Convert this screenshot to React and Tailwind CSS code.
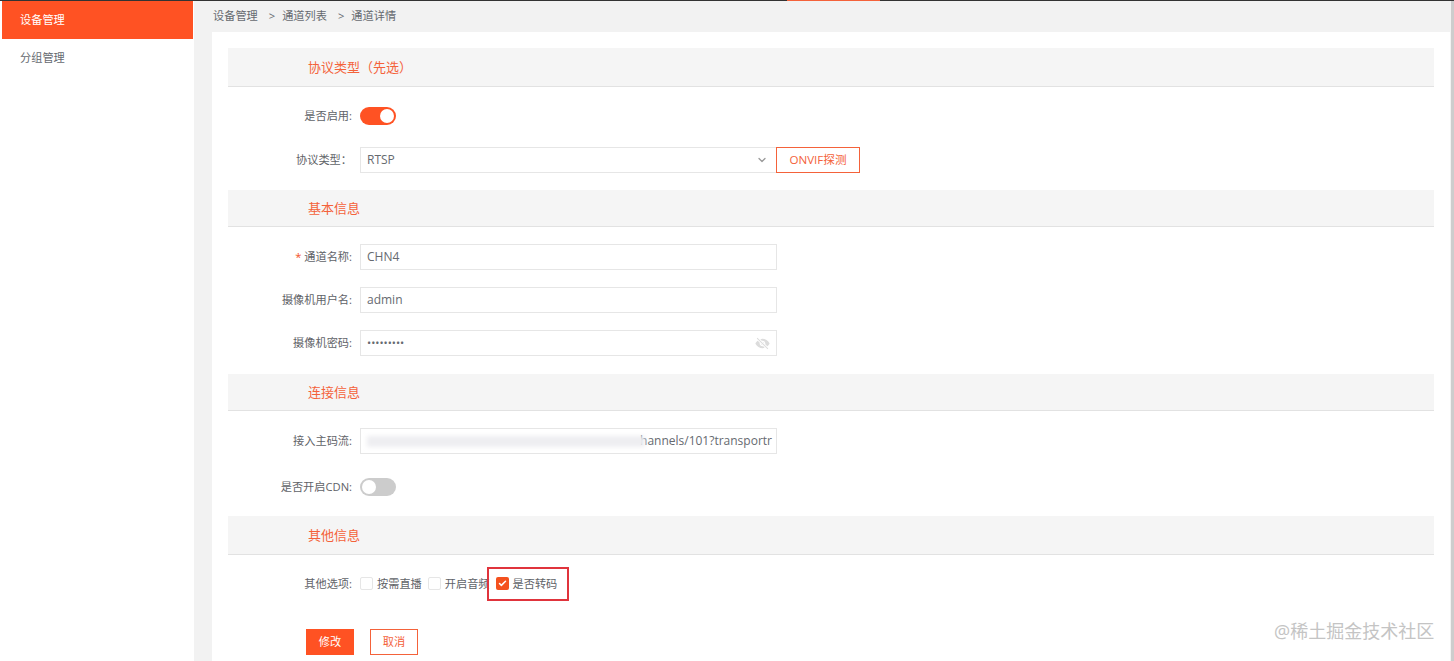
import React from 'react';
import { ChevronDown, Check } from 'lucide-react';
import { IoEyeOff } from 'react-icons/io5';

const fontStack = 'font-["Open_Sans","Noto_Sans_CJK_SC",sans-serif]';

const SectionHeader = ({ title, className = '' }) => (
  <div className={`shrink-0 bg-[#f5f5f5] border-b border-[#e2e2e2] pl-[80px] pt-[2px] flex items-center text-[13px] text-[#f4623a] ${className}`}>
    {title}
  </div>
);

const FormRow = ({ label, required, children, className = '' }) => (
  <div className={`shrink-0 flex items-center h-[26px] ${className}`}>
    <label className="w-[132px] pr-[8px] text-right text-[11.2px] text-[#5f6368] whitespace-nowrap">
      {required && <span className="text-[#f4511e] mr-[3px]">*</span>}
      {label}
    </label>
    {children}
  </div>
);

const TextBox = ({ value, children, className = '' }) => (
  <div className={`w-[417px] h-[26px] flex items-center justify-between border border-[#e6e6e6] bg-white px-[6px] text-[12px] text-[#666a70] overflow-hidden whitespace-nowrap ${className}`}>
    {value}
    {children}
  </div>
);

const Toggle = ({ on }) => (
  <div className={`w-[36px] h-[18px] rounded-full p-[2px] flex ${on ? 'bg-[#ff5223] justify-end' : 'bg-[#cccccc] justify-start'}`}>
    <div className="w-[14px] h-[14px] rounded-full bg-white" />
  </div>
);

const CheckBox = ({ label, checked }) => (
  <div className="flex items-center gap-[4px]">
    <div className={`w-[13px] h-[13px] rounded-[2px] flex items-center justify-center ${checked ? 'bg-[#f4511e]' : 'border border-[#e6e6e6] bg-white'}`}>
      {checked && <Check size={9} strokeWidth={4} className="text-white" />}
    </div>
    <span className="text-[11.2px] text-[#5f6368]">{label}</span>
  </div>
);

export default function App() {
  return (
    <div className={`h-[661px] overflow-hidden flex flex-col bg-white relative ${fontStack}`}>
      <div className="h-[1px] shrink-0 bg-[#333333] flex">
        <div className="ml-[787px] w-[93px] bg-[#f4623a]" />
      </div>
      <div className="flex flex-1 min-h-0">
        <aside className="w-[194px] shrink-0 pl-[2px] pr-[1px] bg-white text-[11.2px]">
          <div className="h-[38px] bg-[#ff5223] text-white pl-[18px] flex items-center">设备管理</div>
          <div className="h-[39px] text-[#666a70] pl-[18px] flex items-center">分组管理</div>
        </aside>
        <main className="flex-1 min-w-0 bg-[#f2f2f2] pr-[1px] flex flex-col">
          <div className="h-[31px] shrink-0 pl-[19px] flex items-center gap-[7px] text-[11.2px] text-[#666a70]">
            <span>设备管理</span>
            <span className="ml-[4px]">&gt;</span>
            <span>通道列表</span>
            <span className="ml-[4px]">&gt;</span>
            <span>通道详情</span>
          </div>
          <div className="flex-1 min-h-0 ml-[18px] bg-white px-[16px] pt-[16px] flex flex-col">
            <SectionHeader title="协议类型（先选）" className="h-[39px]" />
            <FormRow label="是否启用:" className="mt-[16px]">
              <Toggle on />
            </FormRow>
            <FormRow label="协议类型：" className="mt-[18px]">
              <TextBox value="RTSP">
                <ChevronDown size={12} strokeWidth={2.5} className="text-[#999999] mr-[2px]" />
              </TextBox>
              <button className="w-[84px] h-[26px] -ml-[1px] border border-[#f4623a] text-[11.6px] text-[#f4623a]">ONVIF探测</button>
            </FormRow>
            <SectionHeader title="基本信息" className="h-[37px] mt-[17px]" />
            <FormRow label="通道名称:" required className="mt-[17px]">
              <TextBox value="CHN4" />
            </FormRow>
            <FormRow label="摄像机用户名:" className="mt-[17px]">
              <TextBox value="admin" />
            </FormRow>
            <FormRow label="摄像机密码:" className="mt-[17px]">
              <TextBox value={<span className="text-[11px]">•••••••••</span>}>
                <IoEyeOff size={15} className="text-[#dcdcdc]" />
              </TextBox>
            </FormRow>
            <SectionHeader title="连接信息" className="h-[37px] mt-[18px]" />
            <FormRow label="接入主码流:" className="mt-[17px]">
              <TextBox className="relative text-[11.5px]">
                <span className="absolute right-[4px]">hannels/101?transportr</span>
                <div className="absolute left-[6px] top-[7px] w-[278px] h-[11px] bg-[#eeeef1] blur-[2px]" />
              </TextBox>
            </FormRow>
            <FormRow label="是否开启CDN:" className="mt-[20px]">
              <Toggle />
            </FormRow>
            <SectionHeader title="其他信息" className="h-[39px] mt-[16px]" />
            <FormRow label="其他选项:" className="mt-[16px]">
              <div className="flex items-center gap-[6px]">
                <CheckBox label="按需直播" />
                <CheckBox label="开启音频" />
                <CheckBox label="是否转码" checked />
              </div>
            </FormRow>
            <div className="shrink-0 flex gap-[16px] mt-[32px] ml-[78px]">
              <button className="w-[48px] h-[26px] bg-[#ff5223] text-white text-[11.2px]">修改</button>
              <button className="w-[48px] h-[26px] border border-[#f4623a] text-[#f4623a] text-[11.2px]">取消</button>
            </div>
          </div>
        </main>
        <div className="w-[3px] shrink-0 bg-[#cdcdcd]" />
      </div>
      {/* annotation box and watermark sit on top of the page */}
      <div className="absolute left-[487px] top-[567px] w-[82px] h-[34px] border-2 border-[#e0343c]" />
      <div className="absolute left-[1274px] top-[618px] text-[18px] text-[#c4c4c4]">@稀土掘金技术社区</div>
    </div>
  );
}
